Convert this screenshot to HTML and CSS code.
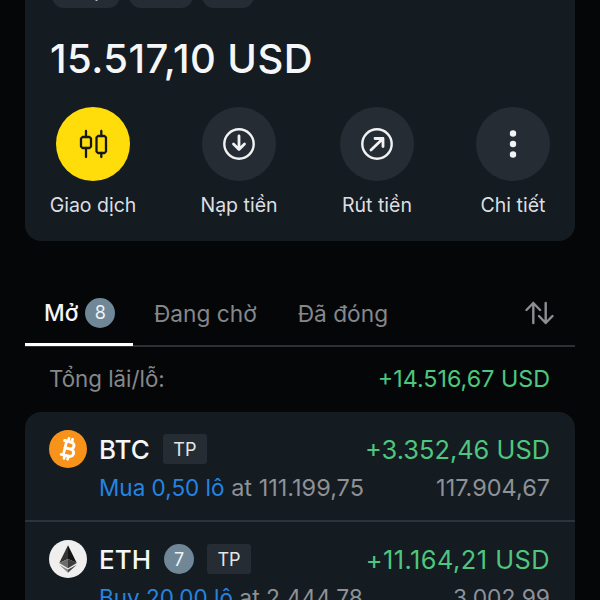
FILE: index.html
```html
<!DOCTYPE html>
<html lang="vi">
<head>
    <meta charset="UTF-8">
    <meta name="viewport" content="width=device-width, initial-scale=1.0">
    <title>Tài khoản</title>
    <link rel="stylesheet" href="styles.css">
</head>
<body>
    <div class="screen">
        <section class="account">
            <div class="pills">
                <span class="pill pill-a">Thật</span>
                <span class="pill pill-b">MT5</span>
                <span class="pill pill-c">Zero</span>
            </div>
            <div class="balance">15.517,10 USD</div>
            <div class="actions">
                <div class="action action-1">
                    <span class="circle circle-yellow">
                        <svg width="30" height="30" viewBox="0 0 30 30" fill="none" stroke="#14181c" stroke-width="2.3" stroke-linecap="round" stroke-linejoin="round">
                            <path d="M8 2v6M8 19v9M23.300 2v5M23.300 24v4"/>
                            <path d="M4.500 8h7l1.500 1.500v8L11.500 19h-7L3 17.500v-8z"/>
                            <path d="M20 7h6.500l1.500 1.500v14L26.500 24H20l-1.500-1.500v-14z"/>
                        </svg>
                    </span>
                    <span class="action-label">Giao dịch</span>
                </div>
                <div class="action action-2">
                    <span class="circle">
                        <svg width="32" height="32" viewBox="0 0 32 32" fill="none" stroke="#f0f2f3" stroke-width="2.4" stroke-linecap="round" stroke-linejoin="round">
                            <circle cx="16" cy="16" r="14.700"/>
                            <path stroke-width="2.800" d="M16 8v13M10.500 16 16 21.500l5.500-5.500"/>
                        </svg>
                    </span>
                    <span class="action-label">Nạp tiền</span>
                </div>
                <div class="action action-3">
                    <span class="circle">
                        <svg width="32" height="32" viewBox="0 0 32 32" fill="none" stroke="#f0f2f3" stroke-width="2.4" stroke-linecap="round" stroke-linejoin="round">
                            <circle cx="16" cy="16" r="14.700"/>
                            <path stroke-width="2.800" d="M10 22 22 10.500M14 10.500h8v8"/>
                        </svg>
                    </span>
                    <span class="action-label">Rút tiền</span>
                </div>
                <div class="action action-4">
                    <span class="circle">
                        <svg width="32" height="32" viewBox="0 0 32 32" fill="#f0f2f3">
                            <circle cx="16" cy="5.500" r="3.200"/>
                            <circle cx="16" cy="16" r="3.200"/>
                            <circle cx="16" cy="26.500" r="3.200"/>
                        </svg>
                    </span>
                    <span class="action-label">Chi tiết</span>
                </div>
            </div>
        </section>

        <nav class="tabs">
            <div class="tab tab-active">Mở <span class="count count-tab">8</span></div>
            <div class="tab">Đang chờ</div>
            <div class="tab">Đã đóng</div>
            <svg class="sort" width="30" height="24" viewBox="0 0 30 24" fill="none" stroke="#8c8f92" stroke-width="2.400" stroke-linecap="round" stroke-linejoin="round">
                <path d="M8.300 22V2M1.500 9l6.800-7 6.800 7"/>
                <path d="M20.700 2v20M14 15l6.700 7 6.800-7"/>
            </svg>
        </nav>

        <div class="total">
            <span>Tổng lãi/lỗ:</span>
            <span class="green total-value">+14.516,67 USD</span>
        </div>

        <section class="positions">
            <div class="position">
                <div class="line">
                    <span class="coin coin-btc">
                        <svg width="38" height="38" viewBox="0 0 36 36">
                            <circle cx="18" cy="18" r="18" fill="#f7931a"/>
                            <g fill="none" stroke="#fff" stroke-linecap="round" stroke-linejoin="round" transform="rotate(14 18 18)">
                                <path stroke-width="2.800" d="M13 11h6.500c4.400 0 4.400 6.500 0 6.500h-4.500M15 17.500h5.500c4.800 0 4.800 7 0 7H13"/>
                                <path stroke-width="2.600" d="M15 11v13.500M16.500 8v3M20 8v3M16.500 24.500v3M20 24.500v3"/>
                            </g>
                        </svg>
                    </span>
                    <span class="symbol">BTC</span>
                    <span class="tag">TP</span>
                    <span class="profit green">+3.352,46 USD</span>
                </div>
                <div class="line line-sub">
                    <span><span class="blue">Mua 0,50 lô</span> at 111.199,75</span>
                    <span>117.904,67</span>
                </div>
            </div>
            <div class="position">
                <div class="line">
                    <span class="coin coin-eth">
                        <svg width="38" height="38" viewBox="0 0 36 36">
                            <circle cx="18" cy="18" r="18" fill="#efefef"/>
                            <path fill="#343434" d="M18 5v13l-8.300 3.800z"/>
                            <path fill="#141414" d="M18 5v13l8.300 3.800z"/>
                            <path fill="#6b6b6b" d="M18 18l-8.300 3.800 8.300 4.900z"/>
                            <path fill="#3c3c3b" d="M18 18l8.300 3.800-8.300 4.900z"/>
                            <path fill="#8a8a8a" d="M9.700 23.400 18 31v-3z"/>
                            <path fill="#4a4a4a" d="M26.300 23.400 18 31v-3z"/>
                        </svg>
                    </span>
                    <span class="symbol">ETH</span>
                    <span class="count">7</span>
                    <span class="tag">TP</span>
                    <span class="profit profit-wide green">+11.164,21 USD</span>
                </div>
                <div class="line line-sub line-sub-narrow">
                    <span><span class="blue">Buy 20,00 lô</span> at 2.444,78</span>
                    <span>3.002,99</span>
                </div>
            </div>
        </section>
    </div>
</body>
</html>
```

FILE: styles.css
```css
html, body {
    margin: 0;
    padding: 0;
    background-color: #050608;
}
body {
    font-family: Inter, "Noto Sans", sans-serif;
    color: #f0f2f3;
}
.screen {
    width: 600px;
    height: 600px;
    overflow: hidden;
    padding: 0 25px;
    box-sizing: border-box;
}
.account {
    height: 241px;
    background-color: #141b21;
    border-radius: 0 0 16px 16px;
    padding: 0 25px;
    box-sizing: border-box;
}
.pills {
    display: flex;
    gap: 9px;
    height: 8px;
    overflow: hidden;
    margin-left: 2px;
}
.pill {
    height: 36px;
    margin-top: -28px;
    border-radius: 12px;
    background-color: #262c33;
    color: #e8eaec;
    font-size: 18px;
    line-height: 38px;
    text-align: center;
    box-sizing: border-box;
}
.pill-a { width: 68px; padding-left: 5px; }
.pill-b { width: 64px; }
.pill-c { width: 52px; }
.balance {
    margin-top: 26px;
    font-size: 40px;
    font-weight: 500;
    letter-spacing: 0.45px;
    line-height: 50px;
    color: #f4f6f7;
}
.actions {
    position: relative;
    height: 110px;
    margin-top: 23px;
}
.action {
    position: absolute;
    top: 0;
    width: 110px;
    display: flex;
    flex-direction: column;
    align-items: center;
}
.action-1 { left: -12px; }
.action-2 { left: 134px; }
.action-3 { left: 272px; }
.action-4 { left: 408px; }
.circle {
    width: 74px;
    height: 74px;
    border-radius: 50%;
    background-color: #262c33;
    display: flex;
    align-items: center;
    justify-content: center;
}
.circle-yellow {
    background-color: #ffdd0b;
}
.action-label {
    margin-top: 11px;
    font-size: 19.500px;
    line-height: 26px;
    color: #dcdfe1;
    white-space: nowrap;
}
.tabs {
    display: flex;
    align-items: center;
    height: 56px;
    margin-top: 48px;
    padding-right: 20px;
    border-bottom: 2px solid #2d2f33;
    position: relative;
}
.tab {
    font-size: 22.700px;
    color: #85888b;
    margin-right: 41px;
    display: flex;
    align-items: center;
    gap: 7px;
    padding-bottom: 8px;
}
.tab-active {
    color: #f4f6f7;
    font-weight: 500;
    width: 108px;
    height: 56px;
    margin-right: 21px;
    box-sizing: border-box;
    padding-left: 19px;
    border-bottom: 3px solid #fff;
    margin-bottom: -2px;
    padding-bottom: 8px;
}
.sort {
    margin-left: auto;
    margin-bottom: 8px;
}
.count {
    width: 30px;
    height: 30px;
    border-radius: 50%;
    background-color: #6f8797;
    color: #f0f2f3;
    font-size: 18px;
    font-weight: 400;
    display: flex;
    align-items: center;
    justify-content: center;
}
.total {
    display: flex;
    justify-content: space-between;
    align-items: center;
    height: 65px;
    padding: 0 25px 2px 24px;
    box-sizing: border-box;
    font-size: 22.300px;
    color: #85888b;
}
.total-value {
    font-size: 23.300px;
}
.green {
    color: #4fc67d;
}
.blue {
    color: #2484e0;
    font-size: 22.500px;
}
.positions {
    background-color: #141b21;
    border-radius: 16px 16px 0 0;
}
.position {
    height: 108px;
    padding: 18px 25px 0;
    box-sizing: border-box;
}
.position + .position {
    border-top: 2px solid #2d333a;
}
.line {
    display: flex;
    align-items: center;
    height: 38px;
}
.coin {
    width: 38px;
    height: 38px;
    margin-left: -1px;
    margin-right: 12px;
}
.coin svg {
    display: block;
}
.symbol {
    font-size: 26px;
    font-weight: 500;
    color: #f4f6f7;
    margin-right: 13px;
}
.line .count {
    margin-right: 13px;
}
.tag {
    width: 44px;
    height: 30px;
    background-color: #262c33;
    border-radius: 3px;
    font-size: 18px;
    color: #e4e6e8;
    display: flex;
    align-items: center;
    justify-content: center;
}
.profit {
    margin-left: auto;
    font-size: 25.400px;
}
.profit-wide {
    letter-spacing: 0.45px;
}
.line-sub {
    justify-content: space-between;
    font-size: 23.500px;
    color: #8e9195;
    padding-left: 49px;
    height: 38px;
}
.line-sub-narrow {
    font-size: 22.800px;
}
```
